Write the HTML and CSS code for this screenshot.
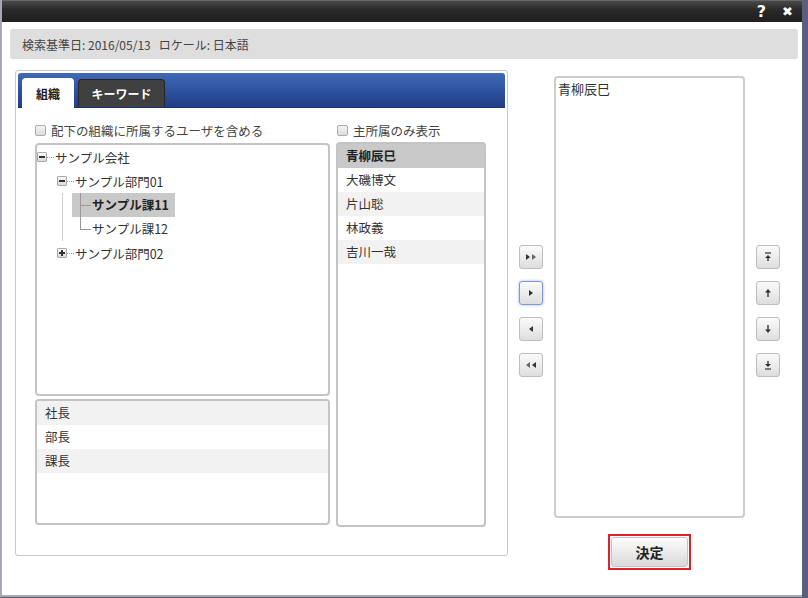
FILE: index.html
```html
<!DOCTYPE html>
<html lang="ja">
<head>
    <meta charset="UTF-8">
    <title>組織・ユーザ選択</title>
    <link rel="stylesheet" href="styles.css">
</head>
<body>
    <div class="dialog">
        <div class="titlebar">
            <span class="title-btn">?</span>
            <span class="title-btn close">&#10006;</span>
        </div>
        <div class="dialog-body">
            <div class="info-bar">検索基準日:&nbsp;2016/05/13&nbsp;&nbsp;&nbsp;ロケール:&nbsp;日本語</div>

            <div class="main-row">
                <!-- left: search panel -->
                <div class="search-panel">
                    <div class="tab-header">
                        <div class="tab active">組織</div>
                        <div class="tab">キーワード</div>
                    </div>
                    <div class="panel-body">
                        <div class="org-col">
                            <label class="check-row"><span class="checkbox"></span>配下の組織に所属するユーザを含める</label>
                            <div class="tree-box">
                                <div class="tree-row lvl0"><span class="toggle minus"></span><span class="dash"></span>サンプル会社</div>
                                <div class="tree-row lvl1"><span class="toggle minus"></span><span class="dash"></span>サンプル部門01</div>
                                <div class="tree-group">
                                    <div class="tree-row leaf"><span class="leaf-label selected">サンプル課11</span></div>
                                    <div class="tree-row leaf last"><span class="leaf-label">サンプル課12</span></div>
                                </div>
                                <div class="tree-row lvl1"><span class="toggle plus"></span><span class="dash"></span>サンプル部門02</div>
                            </div>
                            <div class="list-box position-box">
                                <div class="list-row alt">社長</div>
                                <div class="list-row">部長</div>
                                <div class="list-row alt">課長</div>
                            </div>
                        </div>
                        <div class="user-col">
                            <label class="check-row"><span class="checkbox"></span>主所属のみ表示</label>
                            <div class="list-box user-box">
                                <div class="list-row selected">青柳辰巳</div>
                                <div class="list-row">大磯博文</div>
                                <div class="list-row alt">片山聡</div>
                                <div class="list-row">林政義</div>
                                <div class="list-row alt">吉川一哉</div>
                            </div>
                        </div>
                    </div>
                </div>

                <!-- move buttons -->
                <div class="btn-col">
                    <button class="small-btn" title="すべて追加">
                        <svg width="12" height="8" viewBox="0 0 12 8"><path d="M1 1l4 3-4 3z" fill="#333"/><path d="M7 1l4 3-4 3z" fill="#666"/></svg>
                    </button>
                    <button class="small-btn focus" title="追加">
                        <svg width="6" height="8" viewBox="0 0 6 8"><path d="M1 1l4 3-4 3z" fill="#333"/></svg>
                    </button>
                    <button class="small-btn" title="削除">
                        <svg width="6" height="8" viewBox="0 0 6 8"><path d="M5 1L1 4l4 3z" fill="#333"/></svg>
                    </button>
                    <button class="small-btn" title="すべて削除">
                        <svg width="12" height="8" viewBox="0 0 12 8"><path d="M5 1L1 4l4 3z" fill="#666"/><path d="M11 1L7 4l4 3z" fill="#333"/></svg>
                    </button>
                </div>

                <!-- selected list -->
                <div class="selected-col">
                    <div class="selected-box">
                        <div class="selected-item">青柳辰巳</div>
                    </div>
                    <div class="ok-frame">
                        <button class="ok-btn">決定</button>
                    </div>
                </div>

                <!-- order buttons -->
                <div class="btn-col order">
                    <button class="small-btn" title="先頭へ">
                        <svg width="8" height="10" viewBox="0 0 8 10"><path d="M1 1h6" stroke="#333" stroke-width="1.2"/><path d="M4 3L1 6h6z" fill="#333"/><path d="M4 5v4" stroke="#333" stroke-width="1.4"/></svg>
                    </button>
                    <button class="small-btn" title="上へ">
                        <svg width="8" height="10" viewBox="0 0 8 10"><path d="M4 1L1 4.5h6z" fill="#333"/><path d="M4 4v5" stroke="#333" stroke-width="1.4"/></svg>
                    </button>
                    <button class="small-btn" title="下へ">
                        <svg width="8" height="10" viewBox="0 0 8 10"><path d="M4 1v5" stroke="#333" stroke-width="1.4"/><path d="M4 9L1 5.5h6z" fill="#333"/></svg>
                    </button>
                    <button class="small-btn" title="末尾へ">
                        <svg width="8" height="10" viewBox="0 0 8 10"><path d="M4 1v4" stroke="#333" stroke-width="1.4"/><path d="M4 7L1 4h6z" fill="#333"/><path d="M1 9h6" stroke="#333" stroke-width="1.2"/></svg>
                    </button>
                </div>
            </div>
        </div>
    </div>
</body>
</html>
```

FILE: styles.css
```css
* {
    margin: 0;
    padding: 0;
    box-sizing: border-box;
}
body {
    font-family: "Noto Sans CJK JP", "Noto Sans", sans-serif;
    font-size: 12.5px;
    color: #333;
    background-color: #5b5e7a;
    width: 808px;
    height: 598px;
    overflow: hidden;
}
.dialog {
    width: 802px;
    height: 597px;
    background-color: #fff;
    border-left: 2px solid #a8a8b2;
    border-bottom: 2px solid #a8a8b2;
}
.titlebar {
    height: 22px;
    background: linear-gradient(#4a4a4a, #2a2a2a 40%, #1e1e1e);
    border-top: 1px solid #666;
    display: flex;
    justify-content: flex-end;
    align-items: center;
    padding-right: 9px;
    gap: 16px;
}
.title-btn {
    color: #fff;
    font-family: "DejaVu Sans", sans-serif;
    font-weight: bold;
    font-size: 16px;
    line-height: 1;
}
.title-btn.close {
    font-size: 13px;
}
.dialog-body {
    padding: 7px 0 0 8px;
}
.info-bar {
    width: 788px;
    height: 30px;
    background-color: #dedede;
    border-radius: 3px;
    padding-left: 12px;
    display: flex;
    align-items: center;
    font-size: 12px;
    color: #444;
}
.main-row {
    display: flex;
    margin-top: 11px;
}

/* left panel */
.search-panel {
    margin-left: 5px;
    width: 493px;
    height: 486px;
    border: 1px solid #c8c8c8;
    border-radius: 3px;
    padding: 2px;
}
.tab-header {
    height: 35px;
    background: linear-gradient(#4069b6, #2b4e9c 60%, #223f86);
    border-bottom: 1px solid #1b3370;
    border-radius: 3px 3px 0 0;
    display: flex;
    align-items: flex-end;
    padding-left: 4px;
    gap: 4px;
}
.tab {
    height: 28px;
    width: 87px;
    background-color: #404040;
    border: 1px solid #262626;
    border-bottom: none;
    border-radius: 4px 4px 0 0;
    color: #fff;
    font-weight: bold;
    font-size: 12px;
    display: flex;
    align-items: center;
    justify-content: center;
}
.tab.active {
    width: 52px;
    height: 30px;
    margin-bottom: -1px;
    background-color: #fff;
    border-color: #fff;
    color: #222;
}
.panel-body {
    display: flex;
    gap: 6px;
    padding: 12px 0 0 17px;
}
.org-col {
    width: 295px;
}
.user-col {
    width: 150px;
}
.check-row {
    display: flex;
    align-items: center;
    height: 20px;
    color: #444;
}
.checkbox {
    width: 11px;
    height: 11px;
    border: 1px solid #aaa;
    border-radius: 2px;
    background: linear-gradient(#f4f4f4, #dcdcdc);
    margin-right: 5px;
}
.user-col .check-row {
    margin-left: 1px;
}
.tree-box, .list-box {
    border: 2px solid #c4c4c4;
    border-radius: 4px;
}
.tree-box {
    margin-top: 3px;
    height: 253px;
}
.position-box {
    margin-top: 3px;
    height: 126px;
}
.user-box {
    margin-top: 2px;
    height: 385px;
}
.list-row {
    height: 24px;
    line-height: 24px;
    padding-left: 8px;
    color: #333;
}
.list-row.alt {
    background-color: #f2f2f2;
}
.list-row.selected {
    background-color: #c9c9c9;
    color: #222;
    font-weight: bold;
}

/* tree */
.tree-row {
    display: flex;
    align-items: center;
    height: 24px;
    color: #333;
}
.tree-row.lvl1 {
    padding-left: 20px;
}
.toggle {
    width: 10px;
    height: 10px;
    border: 1px solid #a8a8a8;
    border-radius: 1px;
    background: linear-gradient(#fafafa, #dadada);
    position: relative;
}
.toggle::before {
    content: "";
    position: absolute;
    left: 1px;
    top: 3px;
    width: 6px;
    height: 2px;
    background-color: #333;
}
.toggle.plus::after {
    content: "";
    position: absolute;
    left: 3px;
    top: 1px;
    width: 2px;
    height: 6px;
    background-color: #333;
}
.dash {
    width: 7px;
    margin-right: 1px;
    border-top: 1px dotted #999;
}
.tree-group {
    margin-left: 25px;
    border-left: 1px solid #cfcfcf;
}
.tree-row.leaf {
    padding-left: 9px;
}
.leaf-label {
    position: relative;
    height: 24px;
    line-height: 24px;
    padding: 0 6px 0 20px;
}
.leaf-label.selected {
    background-color: #c9c9c9;
    color: #222;
    font-weight: bold;
}
.leaf-label::before {
    content: "";
    position: absolute;
    left: 8px;
    top: 0;
    width: 10px;
    height: 12px;
    border-left: 1px solid #999;
    border-bottom: 1px solid #999;
}
.leaf:not(.last) .leaf-label::after {
    content: "";
    position: absolute;
    left: 8px;
    top: 12px;
    bottom: 0;
    border-left: 1px solid #999;
}

/* buttons */
.btn-col {
    width: 46px;
    display: flex;
    flex-direction: column;
    align-items: center;
    gap: 12px;
    padding-top: 175px;
}
.btn-col.order {
    width: auto;
    padding-left: 11px;
}
.small-btn {
    width: 24px;
    height: 24px;
    border: 1px solid #bdbdbd;
    border-radius: 3px;
    background: linear-gradient(#fbfbfb, #dedede);
    display: flex;
    align-items: center;
    justify-content: center;
}
.small-btn.focus {
    border-color: #7e97d8;
    box-shadow: 0 0 3px #9fb2e8;
}
.selected-col {
    width: 191px;
    margin-top: 6px;
    display: flex;
    flex-direction: column;
    align-items: center;
}
.selected-box {
    width: 191px;
    height: 442px;
    border: 2px solid #cdcdcd;
    border-radius: 4px;
    padding: 2px 2px;
}
.selected-item {
    font-size: 13px;
    color: #333;
    line-height: 18px;
}
.ok-frame {
    margin-top: 16px;
    border: 2px solid #e3202a;
    padding: 1px;
}
.ok-btn {
    width: 77px;
    height: 30px;
    border: 1px solid #c4c4c4;
    border-radius: 3px;
    background: linear-gradient(#fdfdfd, #d9d9d9);
    font-family: "Noto Sans CJK JP", sans-serif;
    font-weight: bold;
    font-size: 14px;
    color: #222;
    display: block;
}
```
